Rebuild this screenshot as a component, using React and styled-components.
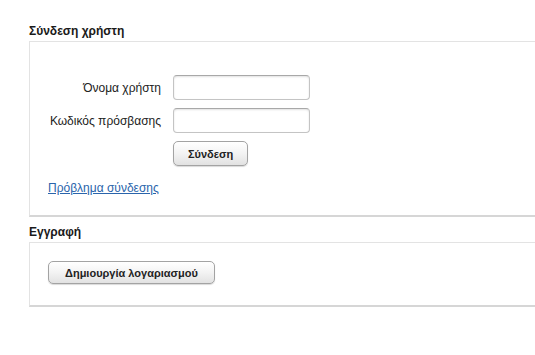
import React from 'react';
import styled, { createGlobalStyle } from 'styled-components';

const Global = createGlobalStyle`
  html, body {
    margin: 0;
    padding: 0;
    background: #fff;
  }
  body {
    font-family: "Liberation Sans", Arial, sans-serif;
    color: #222;
  }
`;

const Page = styled.div`
  padding: 23px 0 0 29px;
  width: 506px;
`;

const SectionTitle = styled.h3`
  margin: 0 0 2px;
  font-size: 12px;
  line-height: 16px;
  font-weight: bold;
  color: #1a1a1a;
`;

const Panel = styled.div`
  border: 1px solid #e3e3e3;
  border-bottom: 2px solid #d6d6d6;
  border-right: none;
  padding: ${props => props.pad};
  margin-bottom: ${props => props.gap || '0'};
`;

const Form = styled.div`
  display: grid;
  grid-template-columns: 113px 137px;
  column-gap: 12px;
  row-gap: 8px;
  align-items: center;
`;

const Label = styled.label`
  text-align: right;
  white-space: nowrap;
  font-size: 12px;
  color: #222;
`;

const Input = styled.input`
  box-sizing: border-box;
  width: 137px;
  height: 25px;
  border: 1px solid #c4c4c4;
  border-top-color: #a8a8a8;
  border-radius: 4px;
  box-shadow: inset 0 1px 2px rgba(0, 0, 0, 0.12);
  background: #fff;
  padding: 2px 5px;
  font-size: 12px;
  outline: none;
`;

const Button = styled.button`
  box-sizing: border-box;
  height: ${props => props.h || '25px'};
  padding: 0 ${props => props.px || '14px'};
  border: 1px solid #a3a3a3;
  border-radius: 5px;
  background: linear-gradient(#ffffff, #f3f3f3 50%, #e2e2e2);
  box-shadow: 0 1px 1px rgba(0, 0, 0, 0.15);
  font-family: "Liberation Sans", Arial, sans-serif;
  font-size: 11px;
  font-weight: bold;
  color: #222;
  cursor: pointer;
`;

const Link = styled.a`
  display: inline-block;
  margin-top: 15px;
  font-size: 12px;
  color: #2a64ab;
  text-decoration: underline;
`;

export default function App() {
  return (
    <>
      <Global />
      <Page>
        <SectionTitle>Σύνδεση χρήστη</SectionTitle>
        <Panel pad="33px 0 19px 18px" gap="7px">
          <Form>
            <Label>Όνομα χρήστη</Label>
            <Input type="text" />
            <Label>Κωδικός πρόσβασης</Label>
            <Input type="password" />
            <span />
            <div>
              <Button>Σύνδεση</Button>
            </div>
          </Form>
          <Link href="#">Πρόβλημα σύνδεσης</Link>
        </Panel>
        <SectionTitle>Εγγραφή</SectionTitle>
        <Panel pad="18px 0 21px 18px">
          <Button h="23px" px="16px">Δημιουργία λογαριασμού</Button>
        </Panel>
      </Page>
    </>
  );
}
